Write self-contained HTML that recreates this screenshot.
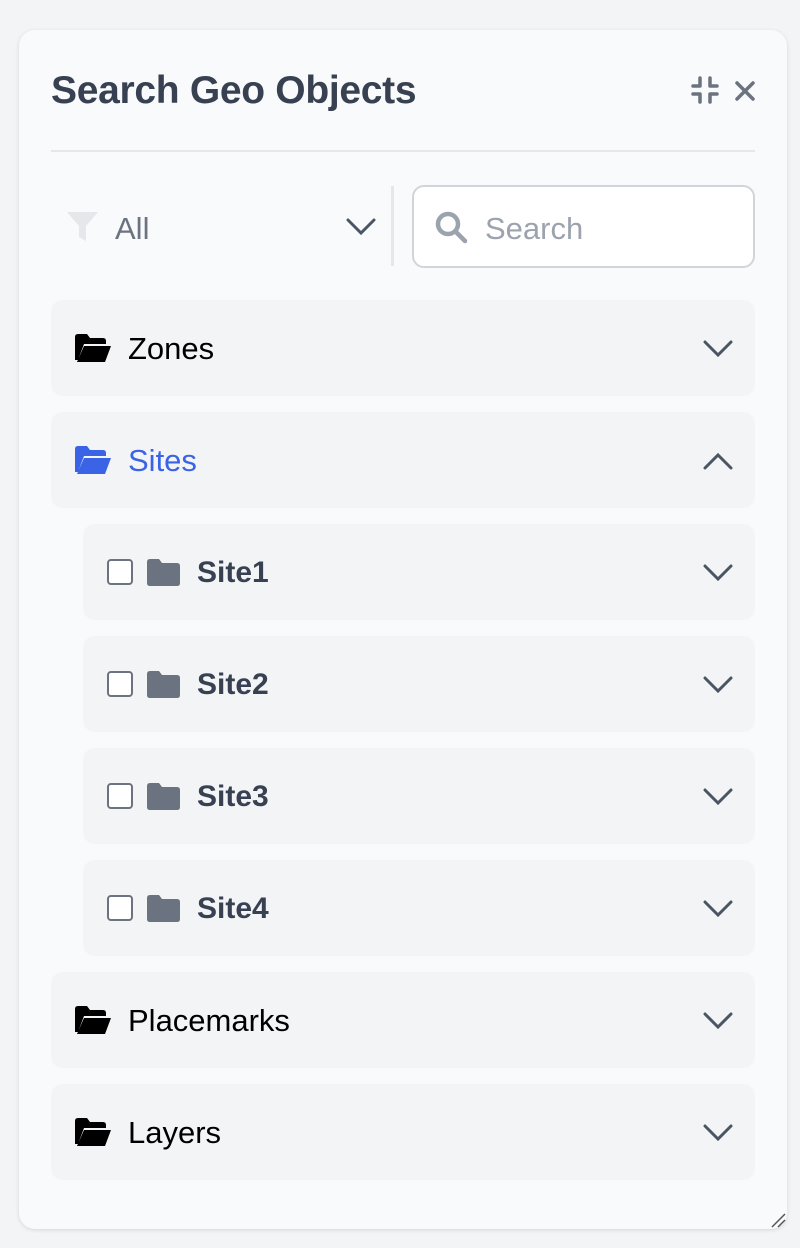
<!DOCTYPE html>
<html><head><style>
*{box-sizing:border-box;margin:0;padding:0}
body{width:800px;height:1248px;background:#f3f4f6;font-family:"Liberation Sans",sans-serif;position:relative;overflow:hidden}
.panel{position:absolute;left:19px;top:30px;width:768px;height:1199px;background:#f9fafb;border-radius:16px;box-shadow:0 1px 4px rgba(0,0,0,.12)}
h1{position:absolute;left:51px;top:69px;font-size:39px;font-weight:bold;color:#374151;letter-spacing:-0.3px}
.hr{position:absolute;left:51px;top:150px;width:704px;height:2px;background:#e5e7eb}
.row{position:absolute;background:#f3f4f6;border-radius:12px;height:96px;display:flex;align-items:center}
.row .t{font-size:31px;color:#000;position:relative;top:1px}
.row .b{font-size:30px;font-weight:bold;color:#374151;position:relative;top:1px}
.chev{position:absolute;right:22px;top:40px}
.cb{width:26px;height:26px;border:2px solid #6b7280;border-radius:4px;background:#fff;margin-left:24px;margin-right:14px}
</style></head><body>
<div class="panel"></div>
<h1>Search Geo Objects</h1>
<svg style="position:absolute;left:690px;top:75px" width="30" height="30" viewBox="0 0 30 30" fill="none" stroke="#6b7280" stroke-width="3.5" stroke-linecap="round" stroke-linejoin="round"><path d="M3 11h7V3M20 3v8h7M3 19h7v8M20 27v-8h7"/></svg>
<svg style="position:absolute;left:734px;top:80px" width="22" height="22" viewBox="0 0 22 22" stroke="#6b7280" stroke-width="3.5" stroke-linecap="round"><path d="M3 3l16 16M19 3L3 19"/></svg>
<div class="hr"></div>
<svg style="position:absolute;left:66px;top:211px" width="33" height="31" viewBox="0 0 33 31"><path d="M1 1h31L20 15v15l-7-4V15z" fill="#e5e7eb"/></svg>
<div style="position:absolute;left:115px;top:211px;font-size:31px;color:#6b7280">All</div>
<svg style="position:absolute;left:346px;top:218px" width="30" height="18" viewBox="0 0 30 18" fill="none" stroke="#4b5563" stroke-width="3" stroke-linecap="round"><path d="M2 2l13 13L28 2"/></svg>
<div style="position:absolute;left:391px;top:186px;width:3px;height:80px;background:#e5e7eb"></div>
<div style="position:absolute;left:412px;top:185px;width:343px;height:83px;background:#fff;border:2px solid #d1d5db;border-radius:12px"></div>
<svg style="position:absolute;left:435px;top:211px" width="33" height="33" viewBox="0 0 33 33" fill="none" stroke="#9ca3af" stroke-width="4.5" stroke-linecap="round"><circle cx="13" cy="13" r="10"/><path d="M21 21l9 9"/></svg>
<div style="position:absolute;left:485px;top:211px;font-size:31px;color:#9ca3af">Search</div>

<div class="row" style="left:51px;top:300px;width:704px"><svg style="margin-left:24px;margin-right:17px" width="36" height="28" viewBox="0 0 36 28"><path d="M0 3q0-3 3-3h9l3 4h13q3 0 3 3v3H9L3 26H0zM9 12h27l-6 16H2z" fill="#000"/></svg><span class="t">Zones</span><svg class="chev" width="30" height="18" viewBox="0 0 30 18" fill="none" stroke="#4b5563" stroke-width="3" stroke-linecap="round"><path d="M2 2l13 13L28 2"/></svg></div>
<div class="row" style="left:51px;top:412px;width:704px"><svg style="margin-left:24px;margin-right:17px" width="36" height="28" viewBox="0 0 36 28"><path d="M0 3q0-3 3-3h9l3 4h13q3 0 3 3v3H9L3 26H0zM9 12h27l-6 16H2z" fill="#3b63e5"/></svg><span class="t" style="color:#3b63e5">Sites</span><svg class="chev" width="30" height="18" viewBox="0 0 30 18" fill="none" stroke="#4b5563" stroke-width="3" stroke-linecap="round"><path d="M2 16L15 3l13 13"/></svg></div>

<div class="row" style="left:83px;top:524px;width:672px"><div class="cb"></div><svg style="margin-right:17px" width="33" height="27" viewBox="0 0 33 27"><path d="M0 3q0-3 3-3h9l3 4h15q3 0 3 3v17q0 3-3 3H3q-3 0-3-3z" fill="#6b7280"/></svg><span class="b">Site1</span><svg class="chev" width="30" height="18" viewBox="0 0 30 18" fill="none" stroke="#4b5563" stroke-width="3" stroke-linecap="round"><path d="M2 2l13 13L28 2"/></svg></div>
<div class="row" style="left:83px;top:636px;width:672px"><div class="cb"></div><svg style="margin-right:17px" width="33" height="27" viewBox="0 0 33 27"><path d="M0 3q0-3 3-3h9l3 4h15q3 0 3 3v17q0 3-3 3H3q-3 0-3-3z" fill="#6b7280"/></svg><span class="b">Site2</span><svg class="chev" width="30" height="18" viewBox="0 0 30 18" fill="none" stroke="#4b5563" stroke-width="3" stroke-linecap="round"><path d="M2 2l13 13L28 2"/></svg></div>
<div class="row" style="left:83px;top:748px;width:672px"><div class="cb"></div><svg style="margin-right:17px" width="33" height="27" viewBox="0 0 33 27"><path d="M0 3q0-3 3-3h9l3 4h15q3 0 3 3v17q0 3-3 3H3q-3 0-3-3z" fill="#6b7280"/></svg><span class="b">Site3</span><svg class="chev" width="30" height="18" viewBox="0 0 30 18" fill="none" stroke="#4b5563" stroke-width="3" stroke-linecap="round"><path d="M2 2l13 13L28 2"/></svg></div>
<div class="row" style="left:83px;top:860px;width:672px"><div class="cb"></div><svg style="margin-right:17px" width="33" height="27" viewBox="0 0 33 27"><path d="M0 3q0-3 3-3h9l3 4h15q3 0 3 3v17q0 3-3 3H3q-3 0-3-3z" fill="#6b7280"/></svg><span class="b">Site4</span><svg class="chev" width="30" height="18" viewBox="0 0 30 18" fill="none" stroke="#4b5563" stroke-width="3" stroke-linecap="round"><path d="M2 2l13 13L28 2"/></svg></div>

<div class="row" style="left:51px;top:972px;width:704px"><svg style="margin-left:24px;margin-right:17px" width="36" height="28" viewBox="0 0 36 28"><path d="M0 3q0-3 3-3h9l3 4h13q3 0 3 3v3H9L3 26H0zM9 12h27l-6 16H2z" fill="#000"/></svg><span class="t">Placemarks</span><svg class="chev" width="30" height="18" viewBox="0 0 30 18" fill="none" stroke="#4b5563" stroke-width="3" stroke-linecap="round"><path d="M2 2l13 13L28 2"/></svg></div>
<div class="row" style="left:51px;top:1084px;width:704px"><svg style="margin-left:24px;margin-right:17px" width="36" height="28" viewBox="0 0 36 28"><path d="M0 3q0-3 3-3h9l3 4h13q3 0 3 3v3H9L3 26H0zM9 12h27l-6 16H2z" fill="#000"/></svg><span class="t">Layers</span><svg class="chev" width="30" height="18" viewBox="0 0 30 18" fill="none" stroke="#4b5563" stroke-width="3" stroke-linecap="round"><path d="M2 2l13 13L28 2"/></svg></div>
<svg style="position:absolute;left:770px;top:1212px" width="16" height="16" viewBox="0 0 16 16" stroke="#555" stroke-width="1.5"><path d="M2 15L15 2M8 15l7-7"/></svg>
</body></html>
